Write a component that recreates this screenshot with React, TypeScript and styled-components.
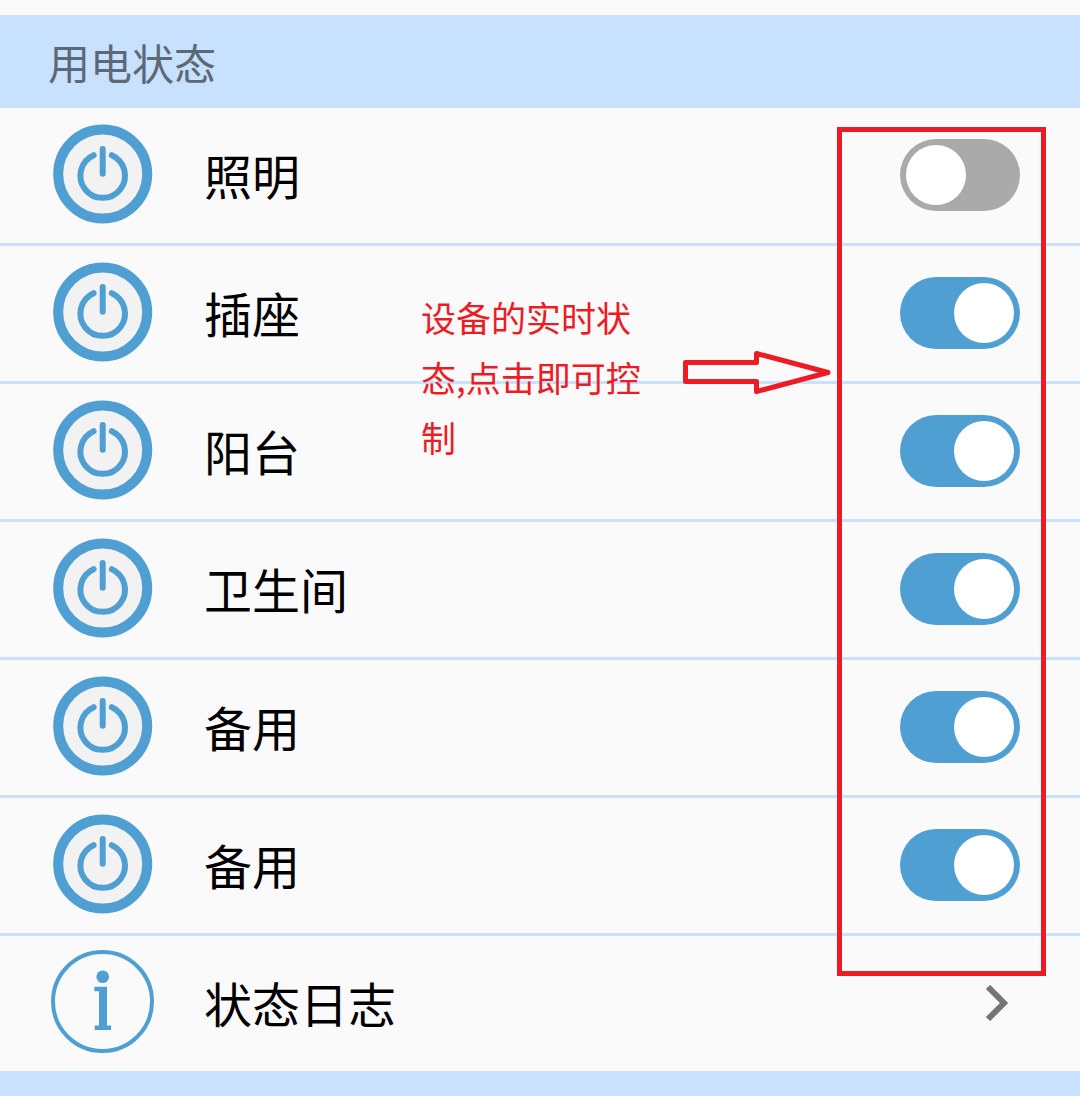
import React, { useState } from "react";
import styled, { createGlobalStyle } from "styled-components";

const blue = "#509fd2";
const paleBlue = "#c7e1ff";
const red = "#ed1c24";

const GlobalStyle = createGlobalStyle`
  *, *::before, *::after { box-sizing: border-box; }
  body {
    margin: 0;
    background: #fafafa;
    color: #000;
    font-family: "Noto Sans CJK SC", "Noto Sans", sans-serif;
  }
`;

const Page = styled.main`
  position: relative;
  display: flex;
  flex-direction: column;
  min-height: 100vh;
  padding-top: 15px;
`;

const SectionTitle = styled.h1`
  margin: 0;
  padding: 17px 48px 16px;
  background: ${paleBlue};
  color: #5c6875;
  font-size: 42px;
  font-weight: 400;
  line-height: 60px;
`;

const List = styled.ul`
  margin: 0;
  padding: 0;
  list-style: none;
`;

const Item = styled.li`
  border-bottom: 3px solid ${paleBlue};

  &:last-child {
    border-bottom: 0;
  }
`;

const Row = styled.div`
  display: flex;
  align-items: center;
  height: 135px;
  padding: 0 60px 1px 51px;
  color: inherit;
  text-decoration: none;
`;

const Icon = styled.svg`
  flex: none;
  width: 103px;
  height: 103px;
  margin: 0 50px 3px 0;
  fill: none;
  stroke: ${blue};
`;

const Name = styled.span`
  flex: 1;
  margin-bottom: 3px;
  font-size: 48px;
  font-weight: 400;
  line-height: 72px;
`;

const Switch = styled.input`
  appearance: none;
  flex: none;
  display: flex;
  width: 120px;
  height: 72px;
  margin: 0;
  padding: 6px;
  border-radius: 36px;
  background: #aaa;
  cursor: pointer;

  &::before {
    content: "";
    width: 60px;
    height: 60px;
    border-radius: 50%;
    background: #fff;
  }

  &:checked {
    justify-content: flex-end;
    background: ${blue};
  }
`;

const Chevron = styled.svg`
  flex: none;
  width: 24px;
  height: 36px;
  margin: 0 11px 1px 0;
  fill: none;
  stroke: #757575;
  stroke-width: 6;
`;

const Footer = styled.footer`
  flex: 1;
  min-height: 25px;
  background: ${paleBlue};
`;

const Highlight = styled.div`
  position: absolute;
  top: 127px;
  right: 34px;
  width: 209px;
  height: 849px;
  border: 5px solid ${red};
  pointer-events: none;
`;

const Note = styled.p`
  position: absolute;
  top: 287px;
  left: 421px;
  width: 230px;
  margin: 0;
  color: ${red};
  font-size: 35px;
  font-weight: 400;
  line-height: 60px;
  pointer-events: none;
`;

const Arrow = styled.svg`
  position: absolute;
  top: 350px;
  right: 249px;
  width: 149px;
  height: 45px;
  fill: none;
  stroke: ${red};
  stroke-width: 5;
  stroke-linejoin: round;
  pointer-events: none;
`;

const PowerIcon = () => (
  <Icon viewBox="0 0 103 103" aria-hidden="true">
    <circle cx="51.7" cy="52" r="44.5" fill="#f2f2f2" strokeWidth="10" />
    <path d="M42.6 33.2A22.3 22.3 0 1 0 60.8 33.2" strokeWidth="6" strokeLinecap="round" />
    <path d="M51.7 27V51.7" strokeWidth="6" strokeLinecap="round" />
  </Icon>
);

const InfoIcon = () => (
  <Icon viewBox="0 0 103 103" aria-hidden="true">
    <circle cx="51.5" cy="51.5" r="49.5" strokeWidth="4" />
    <g fill={blue} stroke="none">
      <circle cx="51.7" cy="26.8" r="6.3" />
      <path d="M43.3 36.7H56V75.5H60V80H43.7V75.5H48V41.3H43.3Z" />
    </g>
  </Icon>
);

const circuits = [
  { id: "lighting", name: "照明", on: false },
  { id: "socket", name: "插座", on: true },
  { id: "balcony", name: "阳台", on: true },
  { id: "bathroom", name: "卫生间", on: true },
  { id: "spare-1", name: "备用", on: true },
  { id: "spare-2", name: "备用", on: true },
];

function CircuitRow({ id, name, on }: { id: string; name: string; on: boolean }) {
  const [checked, setChecked] = useState(on);
  return (
    <Item>
      <Row>
        <PowerIcon />
        <Name as="label" htmlFor={id}>{name}</Name>
        <Switch
          id={id}
          type="checkbox"
          role="switch"
          checked={checked}
          onChange={(event) => setChecked(event.target.checked)}
        />
      </Row>
    </Item>
  );
}

export default function App() {
  return (
    <>
      <GlobalStyle />
      <Page lang="zh-CN">
        <SectionTitle>用电状态</SectionTitle>
        <List>
          {circuits.map((circuit) => (
            <CircuitRow key={circuit.id} {...circuit} />
          ))}
          <Item>
            <Row as="a" href="#log">
              <InfoIcon />
              <Name>状态日志</Name>
              <Chevron viewBox="0 0 24 36" aria-hidden="true">
                <path d="M3 2L19 18L3 34" />
              </Chevron>
            </Row>
          </Item>
        </List>
        <Footer />
        <Highlight />
        <Note>设备的实时状态,点击即可控制</Note>
        <Arrow viewBox="0 0 149 45" aria-hidden="true">
          <path d="M3.5 12.5H74.5V3.5L146 22.5L74.5 41.5V31.5H3.5Z" />
        </Arrow>
      </Page>
    </>
  );
}
